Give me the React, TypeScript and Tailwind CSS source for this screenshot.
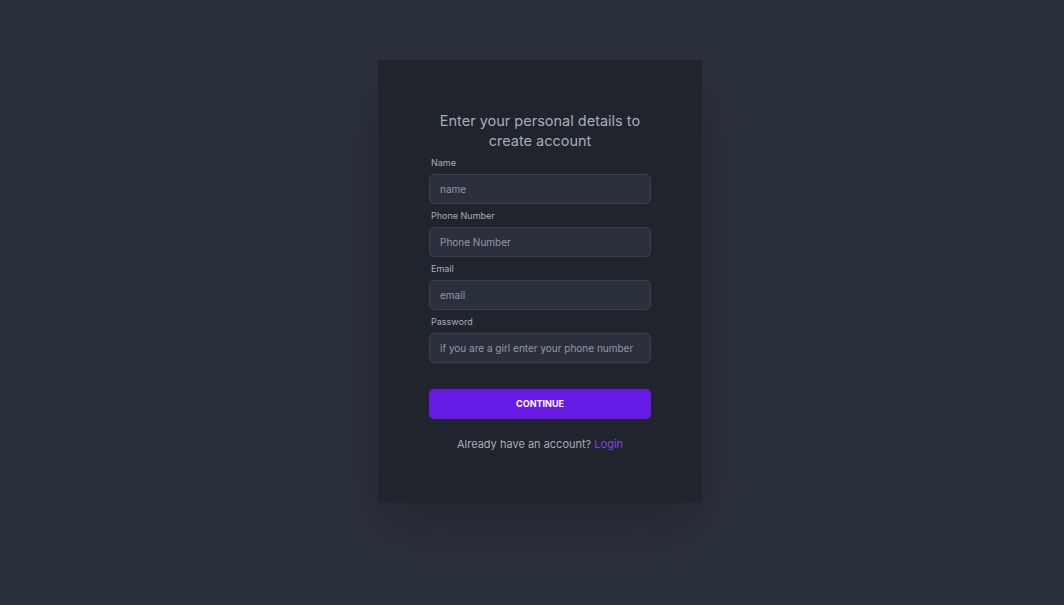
import React from 'react';

interface Field {
  label: string;
  placeholder: string;
  type: string;
}

const fields: Field[] = [
  { label: 'Name', placeholder: 'name', type: 'text' },
  { label: 'Phone Number', placeholder: 'Phone Number', type: 'text' },
  { label: 'Email', placeholder: 'email', type: 'email' },
  { label: 'Password', placeholder: 'if you are a girl enter your phone number', type: 'password' },
];

const App = () => {
  return (
    <div
      className="min-h-[605px] w-full bg-[#2a303c] pt-[60px] pl-4 flex justify-center"
      style={{ fontFamily: 'Inter, "Noto Sans", sans-serif' }}
    >
      <div className="w-[324px] h-[443px] bg-[#20242d] shadow-2xl px-[51px] pt-[51px] flex flex-col">
        <h1 className="text-center text-[14.5px] leading-[20px] text-[#a6adbb]">
          Enter your personal details to create account
        </h1>
        <form className="mt-0 flex flex-col" onSubmit={(e) => e.preventDefault()}>
          {fields.map((field) => (
            <div key={field.label} className="flex flex-col">
              <label className="px-[2px] pt-[5px] pb-[4px] text-[9px] leading-[14px] text-[#a6adbb]">
                {field.label}
              </label>
              <input
                type="text"
                placeholder={field.placeholder}
                className="h-[30px] w-full rounded-[5px] border border-[#3a404c] bg-[#2a303c] px-[10px] text-[10px] text-[#a6adbb] placeholder:text-[#9199a6] outline-none"
              />
            </div>
          ))}
          <button
            type="submit"
            className="mt-[26px] h-[30px] w-full rounded-[5px] bg-[#661ae6] text-[9px] font-bold text-white"
          >
            CONTINUE
          </button>
        </form>
        <p className="mt-[17px] text-center text-[11px] leading-[16px] text-[#a6adbb]">
          Already have an account? <a href="#" className="text-[#8043e0]">Login</a>
        </p>
      </div>
    </div>
  );
};

export default App;
